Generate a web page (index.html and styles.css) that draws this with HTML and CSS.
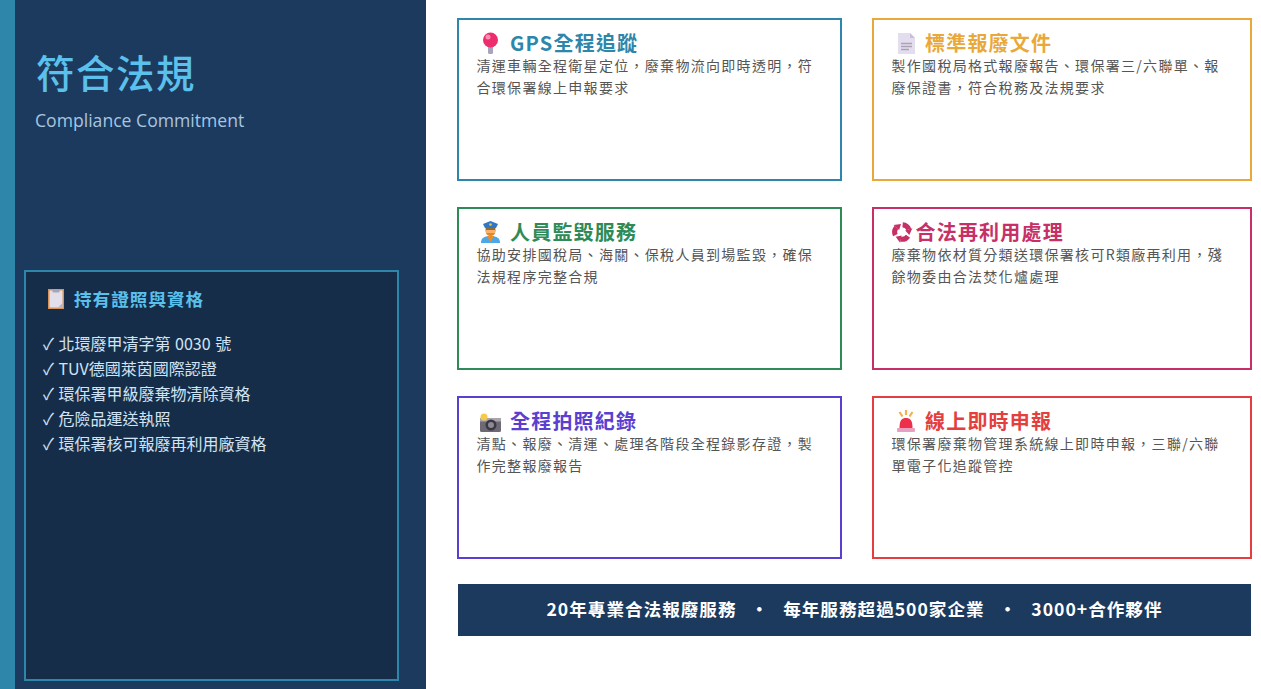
FILE: index.html
```html
<!DOCTYPE html>
<html lang="zh-Hant">
<head>
  <meta charset="UTF-8">
  <title>符合法規</title>
  <link rel="stylesheet" href="styles.css">
</head>
<body>

  <!-- Left panel -->
  <aside class="sidebar">
    <h1 class="page-title">符合法規</h1>
    <p class="page-subtitle">Compliance Commitment</p>

    <div class="license-box">
      <h2 class="license-title">
        <svg class="license-icon" viewBox="0 0 16 20">
          <rect width="16" height="20" fill="#d8935a"/>
          <rect x="1.5" y="1.5" width="13" height="17" fill="#e3dfea"/>
          <path d="M10 18.500 L14.500 14 V18.500 Z" fill="#b9b3c6"/>
          <rect x="4.500" y="0" width="7" height="3.500" rx="1" fill="#a9a4b2"/>
        </svg>
        持有證照與資格
      </h2>
      <ul class="license-list">
        <li>✓ 北環廢甲清字第 0030 號</li>
        <li>✓ TUV德國萊茵國際認證</li>
        <li>✓ 環保署甲級廢棄物清除資格</li>
        <li>✓ 危險品運送執照</li>
        <li>✓ 環保署核可報廢再利用廠資格</li>
      </ul>
    </div>
  </aside>

  <!-- Service cards -->
  <main class="content">
    <div class="card-grid">
      <div class="card card-blue">
        <h3 class="card-title">
          <svg class="card-icon" viewBox="0 0 20 24">
            <rect x="8" y="13" width="5" height="10" rx="1.500" fill="#aaa3bd"/>
            <circle cx="10.500" cy="9" r="7.500" fill="#ee2d6e"/>
            <circle cx="8" cy="6" r="2.500" fill="#f98fae"/>
          </svg>
          GPS全程追蹤
        </h3>
        <p>清運車輛全程衛星定位，廢棄物流向即時透明，符合環保署線上申報要求</p>
      </div>

      <div class="card card-orange">
        <h3 class="card-title">
          <svg class="card-icon" viewBox="0 0 20 24">
            <path d="M3 2 H15 L20 7 V23 H3 Z" fill="#e4dcef"/>
            <path d="M15 2 L20 7 H15 Z" fill="#c9bfd8"/>
            <path d="M6 12.500 H17 M6 15.500 H17 M6 18.500 H14" stroke="#a9a3b4" stroke-width="1.400"/>
          </svg>
          標準報廢文件
        </h3>
        <p>製作國稅局格式報廢報告、環保署三/六聯單、報廢保證書，符合稅務及法規要求</p>
      </div>

      <div class="card card-green">
        <h3 class="card-title">
          <svg class="card-icon" viewBox="0 0 20 24">
            <path d="M1 23 C1 18 4 16 10.500 16 C17 16 20 18 20 23 Z" fill="#4aa8e8"/>
            <path d="M7 16 L10.500 22 L14 16 Z" fill="#f08a24"/>
            <circle cx="10.500" cy="10" r="5.500" fill="#f7b267"/>
            <path d="M6 13 C7 17 14 17 15 13 Z" fill="#e8842c"/>
            <path d="M6 9 H15" stroke="#6b4a2a" stroke-width="1.400"/>
            <path d="M3 4 L10.500 1 L18 4 L16 8 H5 Z" fill="#2f78c4"/>
            <circle cx="10.500" cy="4.500" r="1.300" fill="#f5c542"/>
          </svg>
          人員監毀服務
        </h3>
        <p>協助安排國稅局、海關、保稅人員到場監毀，確保法規程序完整合規</p>
      </div>

      <div class="card card-red">
        <h3 class="card-title">
          <svg class="recycle-icon" viewBox="0 0 24 24">
            <g id="recycle-arm">
              <path d="M4.750 15.400 A8 8 0 0 1 5.900 6.900" fill="none" stroke="#c73066" stroke-width="5.500"/>
              <path d="M2.800 4.300 L10.900 3.400 L8.900 9.800 Z" fill="#c73066"/>
            </g>
            <use href="#recycle-arm" transform="rotate(120 12 12)"/>
            <use href="#recycle-arm" transform="rotate(240 12 12)"/>
          </svg>
          合法再利用處理
        </h3>
        <p>廢棄物依材質分類送環保署核可R類廠再利用，殘餘物委由合法焚化爐處理</p>
      </div>

      <div class="card card-purple">
        <h3 class="card-title">
          <svg class="card-icon card-icon-wide" viewBox="0 0 24 24">
            <rect x="2" y="9" width="21" height="14" rx="1.500" fill="#6d6a75"/>
            <rect x="2" y="9" width="21" height="3.500" fill="#a8a5ad"/>
            <circle cx="13" cy="16" r="5.500" fill="#3a3840"/>
            <circle cx="13" cy="16" r="3" fill="#8d8a96"/>
            <circle cx="6" cy="8" r="3.500" fill="#f7c948"/>
          </svg>
          全程拍照紀錄
        </h3>
        <p>清點、報廢、清運、處理各階段全程錄影存證，製作完整報廢報告</p>
      </div>

      <div class="card card-pink">
        <h3 class="card-title">
          <svg class="card-icon" viewBox="0 0 20 24">
            <path d="M4.500 19 C4.500 11 7 9 11 9 C15 9 17.500 11 17.500 19 Z" fill="#ee2f4b"/>
            <rect x="2" y="19" width="18" height="4" rx="1" fill="#e9a0c0"/>
            <path d="M11 1 V6 M4.500 3 L7.500 7.500 M17.500 3 L14.500 7.500" stroke="#f3b04e" stroke-width="2.200"/>
          </svg>
          線上即時申報
        </h3>
        <p>環保署廢棄物管理系統線上即時申報，三聯/六聯單電子化追蹤管控</p>
      </div>
    </div>

    <div class="stats-bar">
      <span>20年專業合法報廢服務</span>
      <span>•</span>
      <span>每年服務超過500家企業</span>
      <span>•</span>
      <span>3000+合作夥伴</span>
    </div>
  </main>

</body>
</html>
```

FILE: styles.css
```css
/* Page */
body {
  margin: 0;
  width: 1261px;
  height: 689px;
  display: flex;
  overflow: hidden;
  background: #fff;
  font-family: "Noto Sans CJK TC", "Noto Sans", sans-serif;
}

/* Left panel */
.sidebar {
  box-sizing: border-box;
  width: 426px;
  height: 689px;
  flex-shrink: 0;
  padding: 42px 27px 8px 9px;
  background: #1c3a5e;
  border-left: 15px solid #2e86ab;
}

.page-title {
  margin: 0 0 0 12px;
  font-size: 38.400px;
  line-height: 58px;
  font-weight: 500;
  letter-spacing: 1.600px;
  color: #5bc0eb;
}

.page-subtitle {
  margin: 9px 0 0 11px;
  font-family: "Open Sans", sans-serif;
  font-size: 17.600px;
  line-height: 22px;
  color: #a8c5e0;
}

.license-box {
  box-sizing: border-box;
  height: 411px;
  margin-top: 139px;
  padding: 14px 16px 14px 17px;
  background: #162d4a;
  border: 2px solid #2e86ab;
}

.license-title {
  display: flex;
  align-items: center;
  gap: 10px;
  margin: 0 0 19px 3px;
  font-size: 17.600px;
  line-height: 26px;
  font-weight: 700;
  letter-spacing: 1px;
  color: #5bc0eb;
}

.license-icon {
  width: 16px;
  height: 20px;
  margin-left: 2px;
}

.license-list {
  margin: 0;
  padding: 0;
  list-style: none;
  font-size: 16px;
  line-height: 25px;
  word-spacing: 1px;
  color: #d0e4f5;
}

/* Right side */
.content {
  padding: 18px 0 0 31px;
}

.card-grid {
  display: grid;
  grid-template-columns: 385px 380px;
  grid-auto-rows: 163px;
  column-gap: 30px;
  row-gap: 26px;
}

.card {
  box-sizing: border-box;
  padding: 11px 18px 0 17.500px;
  border: 2px solid #2e86ab;
  background: #fff;
}

.card p {
  margin: 0;
  font-size: 14px;
  line-height: 22px;
  letter-spacing: 1.300px;
  color: #555;
}

.card-title {
  display: flex;
  align-items: center;
  margin: 0 0 -1px;
  font-size: 20px;
  line-height: 24px;
  font-weight: 700;
  letter-spacing: 1.200px;
}

.card-icon {
  width: 20px;
  height: 24px;
  margin: 0 10px 0 3.500px;
}

.card-icon-wide {
  width: 24px;
  margin: 0 8px 0 1.500px;
}

.recycle-icon {
  width: 22px;
  height: 22px;
  margin: 0 2.500px 0 -0.500px;
}

.card-blue { border-color: #2e86ab; }
.card-blue .card-title { color: #2e86ab; }
.card-orange { border-color: #e9a83a; }
.card-orange .card-title { color: #e9a83a; }
.card-green { border-color: #2e8b57; }
.card-green .card-title { color: #2e8b57; }
.card-red { border-color: #c73066; }
.card-red .card-title { color: #c73066; }
.card-purple { border-color: #5a3fd0; }
.card-purple .card-title { color: #5a3fd0; }
.card-pink { border-color: #e53e3e; }
.card-pink .card-title { color: #e53e3e; }

/* Bottom stats bar */
.stats-bar {
  box-sizing: border-box;
  display: flex;
  justify-content: center;
  align-items: center;
  gap: 14px;
  width: 793px;
  height: 52px;
  margin: 25px 0 0 1px;
  padding-bottom: 3px;
  background: #1c3a5e;
  color: #fff;
  font-size: 17.600px;
  font-weight: 700;
  letter-spacing: 1px;
}
```
